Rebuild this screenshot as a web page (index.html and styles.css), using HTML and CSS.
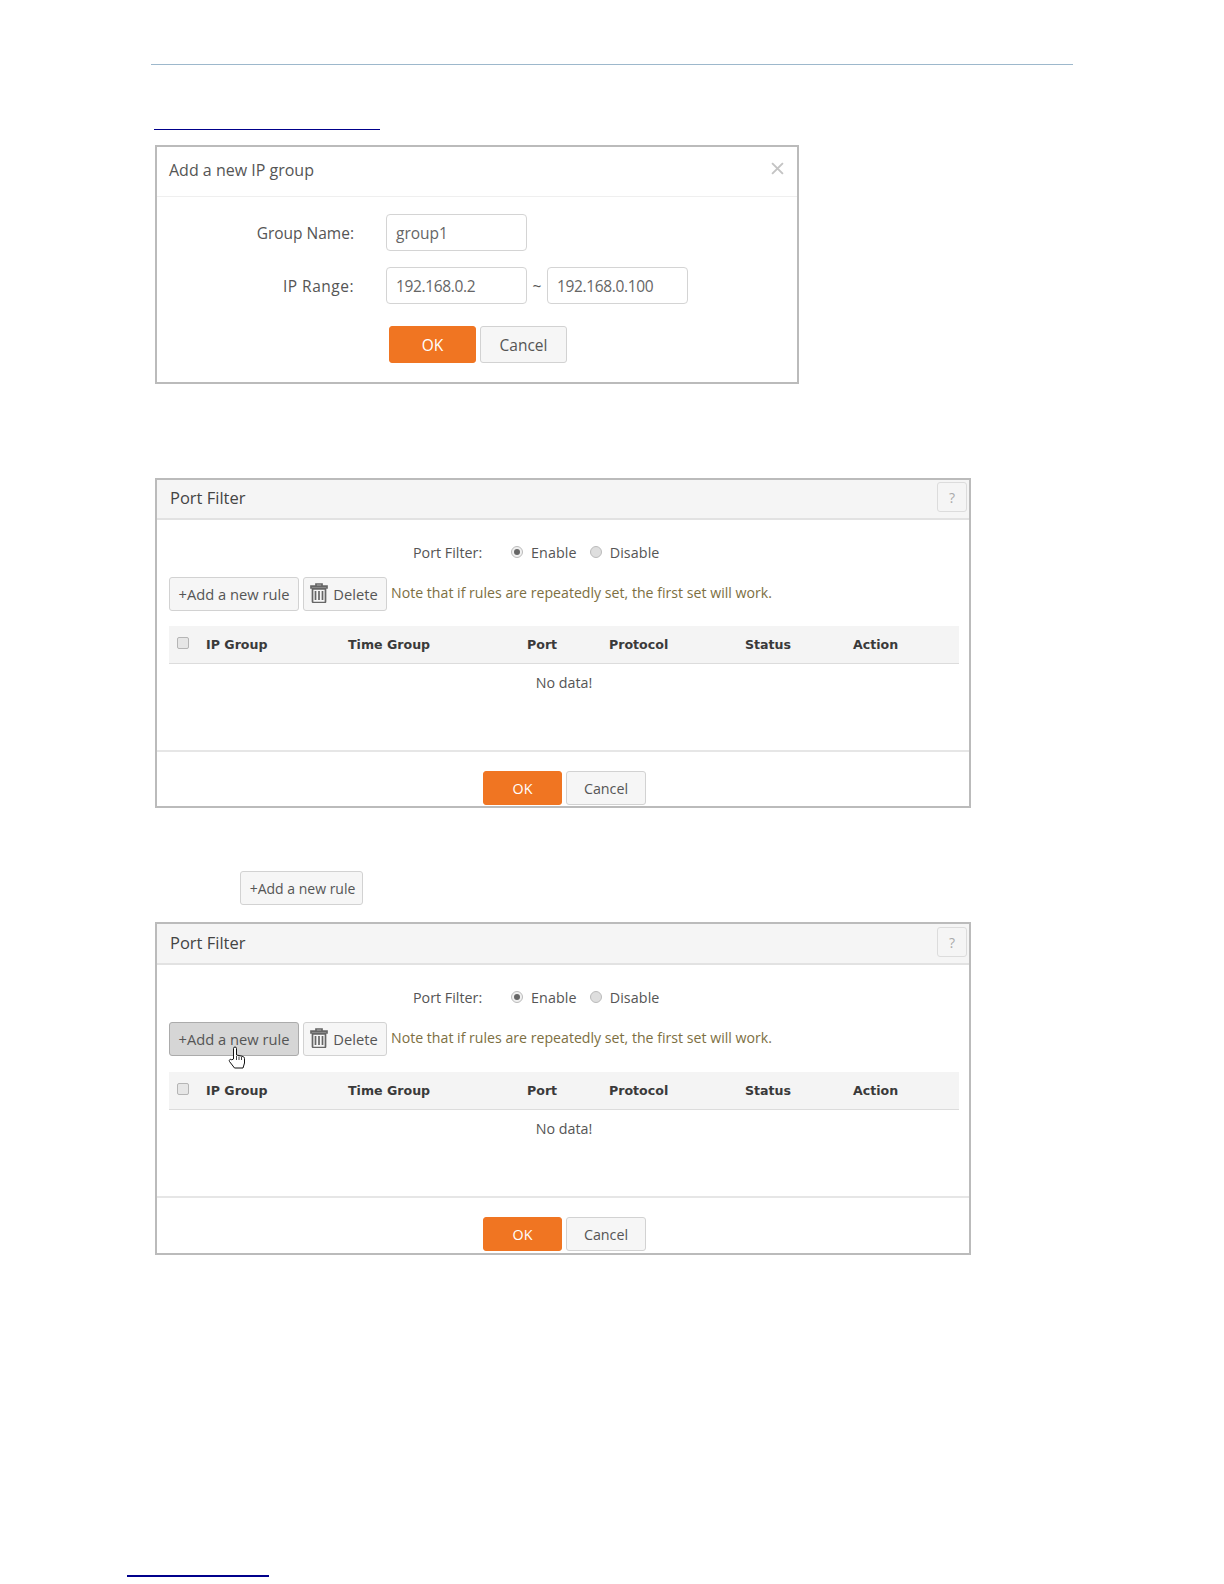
FILE: index.html
```html
<!DOCTYPE html>
<html lang="en">
<head>
<meta charset="utf-8">
<title>Port Filter</title>
<link rel="stylesheet" href="styles.css">
</head>
<body>
<div class="top-rule"></div>
<div class="link-rule"></div>

<section class="dialog">
  <header class="dialog-head">
    <span>Add a new IP group</span>
    <svg class="close" viewBox="0 0 12 12" width="13" height="13"><path d="M1 1L11 11M11 1L1 11" stroke="#c4c4c4" stroke-width="1.8" fill="none"/></svg>
  </header>
  <div class="field first">
    <label>Group Name:</label>
    <span class="input">group1</span>
  </div>
  <div class="field">
    <label class="wide">IP Range:</label>
    <span class="input num">192.168.0.2</span>
    <span class="tilde">~</span>
    <span class="input num">192.168.0.100</span>
  </div>
  <div class="dialog-actions">
    <button class="btn primary">OK</button>
    <button class="btn">Cancel</button>
  </div>
</section>

<section class="panel first-panel">
  <header class="panel-head"><span>Port Filter</span><span class="help">?</span></header>
  <div class="panel-body">
    <div class="radios">
      <span class="radio-label">Port Filter:</span>
      <span class="radio on"></span><span class="radio-text">Enable</span>
      <span class="radio"></span><span class="radio-text">Disable</span>
    </div>
    <div class="toolbar">
      <button class="btn tool add">+Add a new rule</button>
      <button class="btn tool del">
        <svg viewBox="0 0 18 20" width="18" height="20"><path d="M6 2.500V1h6v1.500M1 3.200h16v1.800H1zM2.500 6h13v12.500a1 1 0 0 1-1 1h-11a1 1 0 0 1-1-1zM5.500 8v9M9 8v9M12.500 8v9" fill="none" stroke="#666" stroke-width="1.700"/></svg>
        Delete
      </button>
      <span class="note">Note that if rules are repeatedly set, the first set will work.</span>
    </div>
    <div class="thead">
      <span class="check"></span><span>IP Group</span><span>Time Group</span><span>Port</span><span>Protocol</span><span>Status</span><span>Action</span>
    </div>
    <div class="empty">No data!</div>
  </div>
  <footer class="panel-foot">
    <button class="btn primary">OK</button>
    <button class="btn">Cancel</button>
  </footer>
</section>

<button class="btn tool add standalone">+Add a new rule</button>

<section class="panel second-panel">
  <header class="panel-head"><span>Port Filter</span><span class="help">?</span></header>
  <div class="panel-body">
    <div class="radios">
      <span class="radio-label">Port Filter:</span>
      <span class="radio on"></span><span class="radio-text">Enable</span>
      <span class="radio"></span><span class="radio-text">Disable</span>
    </div>
    <div class="toolbar">
      <button class="btn tool add hover">+Add a new rule
        <svg class="cursor" viewBox="0 0 18 23" width="18" height="23"><path d="M5.500 13V2.500a1.500 1.500 0 0 1 3 0V9l5.500 1.200c1.500.4 2.500 1 2.500 2.300V17l-1.500 5H6.500L1.500 15.500c-1-1.500 1-3 2.300-1.700z" fill="#fff" stroke="#111" stroke-width="1"/><path d="M8.500 10v4M11 10.500v3.500M13.500 11v3" stroke="#111" stroke-width=".8" fill="none"/></svg>
      </button>
      <button class="btn tool del">
        <svg viewBox="0 0 18 20" width="18" height="20"><path d="M6 2.500V1h6v1.500M1 3.200h16v1.800H1zM2.500 6h13v12.500a1 1 0 0 1-1 1h-11a1 1 0 0 1-1-1zM5.500 8v9M9 8v9M12.500 8v9" fill="none" stroke="#666" stroke-width="1.700"/></svg>
        Delete
      </button>
      <span class="note">Note that if rules are repeatedly set, the first set will work.</span>
    </div>
    <div class="thead">
      <span class="check"></span><span>IP Group</span><span>Time Group</span><span>Port</span><span>Protocol</span><span>Status</span><span>Action</span>
    </div>
    <div class="empty">No data!</div>
  </div>
  <footer class="panel-foot">
    <button class="btn primary">OK</button>
    <button class="btn">Cancel</button>
  </footer>
</section>

<div class="bottom-rule"></div>
</body>
</html>
```

FILE: styles.css
```css
* { box-sizing: border-box; }
html, body { margin: 0; padding: 0; background: #fff; }
body {
  height: 1584px;
  overflow: hidden;
  font-family: "Open Sans", "Noto Sans", sans-serif;
  font-size: 14.300px;
  color: #555;
}
.top-rule { margin: 64px 0 0 151px; width: 922px; height: 1px; background: #9db8cc; }
.link-rule { margin: 64px 0 0 154px; width: 226px; height: 1px; background: #00008b; }

.btn {
  display: inline-flex;
  align-items: center;
  justify-content: center;
  padding: 0;
  border: 1px solid #d2d2d2;
  border-radius: 3px;
  background: #f6f6f6;
  font: inherit;
  color: #555;
}
.btn.primary { background: #f07522; border-color: #f07522; color: #fff; }

/* dialog */
.dialog {
  margin: 15px 0 0 155px;
  width: 644px;
  height: 239px;
  border: 2px solid #bbb;
}
.dialog-head {
  display: flex;
  align-items: center;
  justify-content: space-between;
  height: 50px;
  padding: 0 13px 4px 12px;
  border-bottom: 1px solid #efefef;
  font-size: 16px;
  color: #555;
}
.close { margin-top: -2px; }
.field { display: flex; align-items: center; margin-top: 16px; height: 37px; font-size: 15.500px; }
.field.first { margin-top: 17px; }
.field label { width: 197px; margin-right: 32px; text-align: right; }
.field label.wide { letter-spacing: .5px; }
.input {
  display: flex;
  align-items: center;
  width: 141px;
  height: 37px;
  padding-left: 9px;
  border: 1px solid #d4d4d4;
  border-radius: 4px;
  color: #666;
}
.input.num { letter-spacing: -.35px; }
.tilde { width: 20px; text-align: center; }
.dialog-actions { display: flex; gap: 4px; margin: 22px 0 0 232px; }
.dialog-actions .btn { width: 87px; height: 37px; font-size: 15.500px; }

/* panels */
.panel {
  margin-left: 155px;
  width: 816px;
  border: 2px solid #bbb;
}
.first-panel { margin-top: 94px; height: 330px; }
.second-panel { margin-top: 17px; height: 333px; }
.panel-head {
  display: flex;
  align-items: center;
  justify-content: space-between;
  height: 40px;
  padding: 0 2px 4px 13px;
  background: #f5f5f5;
  border-bottom: 2px solid #e2e2e2;
  font-size: 16.500px;
  color: #444;
}
.second-panel .panel-head { height: 41px; padding-bottom: 3px; }
.help {
  display: flex;
  align-items: center;
  justify-content: center;
  width: 30px;
  height: 30px;
  border: 1px solid #dcdcdc;
  border-radius: 3px;
  color: #aaa;
  font-size: 14px;
}
.panel-body { padding: 0 10px 0 12px; }
.radios { display: flex; align-items: center; height: 20px; margin: 22px 0 0 244px; }
.radio-label { width: 98px; }
.radio {
  position: relative;
  width: 12px;
  height: 12px;
  border: 1px solid #bbb;
  border-radius: 50%;
  background: #dedede;
}
.radio.on { background: #f0f0f0; }
.radio.on::after {
  content: "";
  position: absolute;
  top: 2px;
  left: 2px;
  width: 6px;
  height: 6px;
  border-radius: 50%;
  background: #666;
}
.radio + .radio-text { margin: 0 13px 0 8px; letter-spacing: .1px; }
.toolbar { display: flex; align-items: flex-start; gap: 4px; margin-top: 15px; height: 34px; }
.tool { height: 34px; font-size: 14.700px; }
.add { width: 130px; }
.del { width: 84px; gap: 5px; padding-right: 1px; }
.del svg { margin-top: -3px; margin-left: -1px; }
.hover { position: relative; background: #d6d6d6; border-color: #ababab; }
.cursor { position: absolute; left: 58px; top: 23px; }
.standalone { display: flex; width: 123px; margin: 63px 0 0 240px; padding-left: 2px; font-size: 14px; }
.note { margin-top: 6px; color: #7d6f42; white-space: nowrap; font-size: 14.150px; }
.thead {
  display: grid;
  grid-template-columns: 29px 142px 179px 82px 136px 108px 1fr;
  align-items: center;
  width: 790px;
  height: 38px;
  margin-top: 15px;
  padding-left: 8px;
  background: #f4f4f4;
  border-bottom: 1px solid #dcdcdc;
  font-family: "DejaVu Sans", sans-serif;
  font-weight: 700;
  font-size: 12.600px;
  color: #3a3a3a;
}
.second-panel .thead { margin-top: 16px; }
.check {
  width: 12px;
  height: 12px;
  margin-top: -3px;
  border: 1px solid #b5b5b5;
  border-radius: 2px;
  background: #e6e6e6;
}
.empty { height: 86px; padding-top: 9px; line-height: 20px; text-align: center; width: 790px; }
.panel-foot { display: flex; gap: 4px; padding: 19px 0 0 326px; border-top: 2px solid #e6e6e6; }
.panel-foot .btn { width: 79px; height: 34px; }
.panel-foot .btn + .btn { width: 80px; }
.bottom-rule { margin: 320px 0 0 127px; width: 142px; height: 2px; background: #00008b; }
```
